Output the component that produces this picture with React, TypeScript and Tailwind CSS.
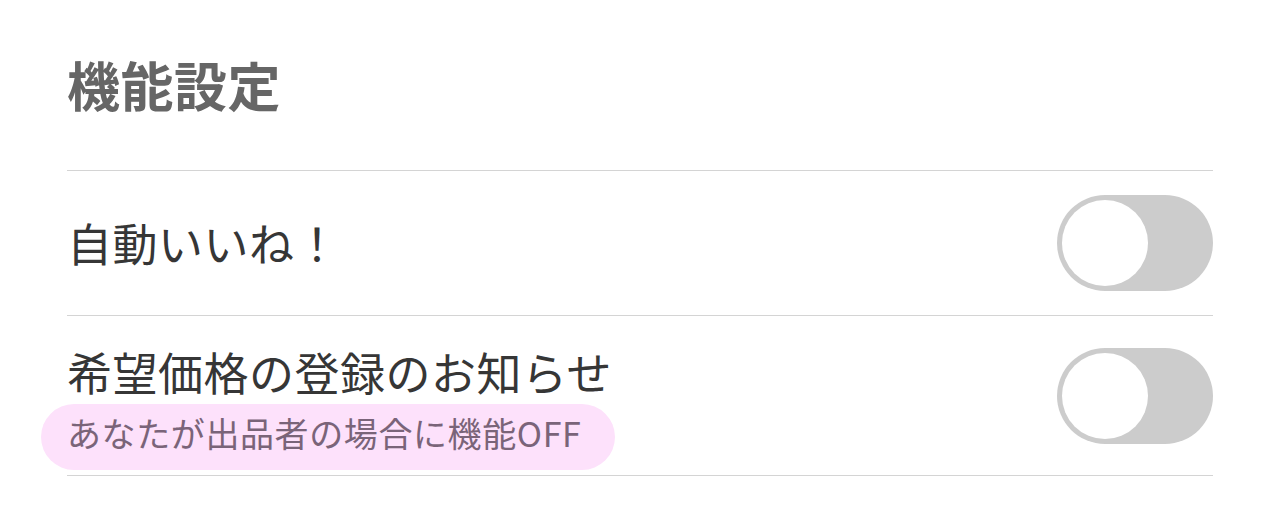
import React from "react";

function Toggle() {
  return (
    <div className="w-[156px] h-[96px] rounded-full bg-[#cccccc] p-[5px] flex items-center shrink-0">
      <div className="w-[86px] h-[86px] rounded-full bg-white" />
    </div>
  );
}

export default function App() {
  return (
    <div
      className="w-[1280px] h-[528px] bg-white px-[67px] overflow-hidden"
      style={{ fontFamily: '"Noto Sans CJK JP", "Noto Sans", sans-serif' }}
    >
      <div className="h-[171px] flex items-center border-b border-[#d4d4d4]">
        <h1 className="text-[53px] leading-[60px] font-bold text-[#666666] tracking-[0.5px] -mt-[2px]">機能設定</h1>
      </div>
      <div className="h-[145px] flex items-center justify-between border-b border-[#d4d4d4]">
        <div className="text-[45px] leading-[56px] text-[#363636] tracking-[0.5px]">自動いいね！</div>
        <Toggle />
      </div>
      <div className="h-[160px] flex items-center justify-between border-b border-[#d4d4d4]">
        <div className="flex flex-col pt-[16px]">
          <div className="text-[45px] leading-[56px] text-[#363636] tracking-[0.5px]">希望価格の登録のお知らせ</div>
          <div className="w-fit -ml-[26px] mt-[4px] pl-[26px] pr-[34px] pt-[5px] pb-[13px] rounded-full bg-[#fde1fb] text-[34px] leading-[48px] text-[#7a6479] tracking-[0.6px] -mb-[6px]">
            あなたが出品者の場合に機能OFF
          </div>
        </div>
        <Toggle />
      </div>
    </div>
  );
}
